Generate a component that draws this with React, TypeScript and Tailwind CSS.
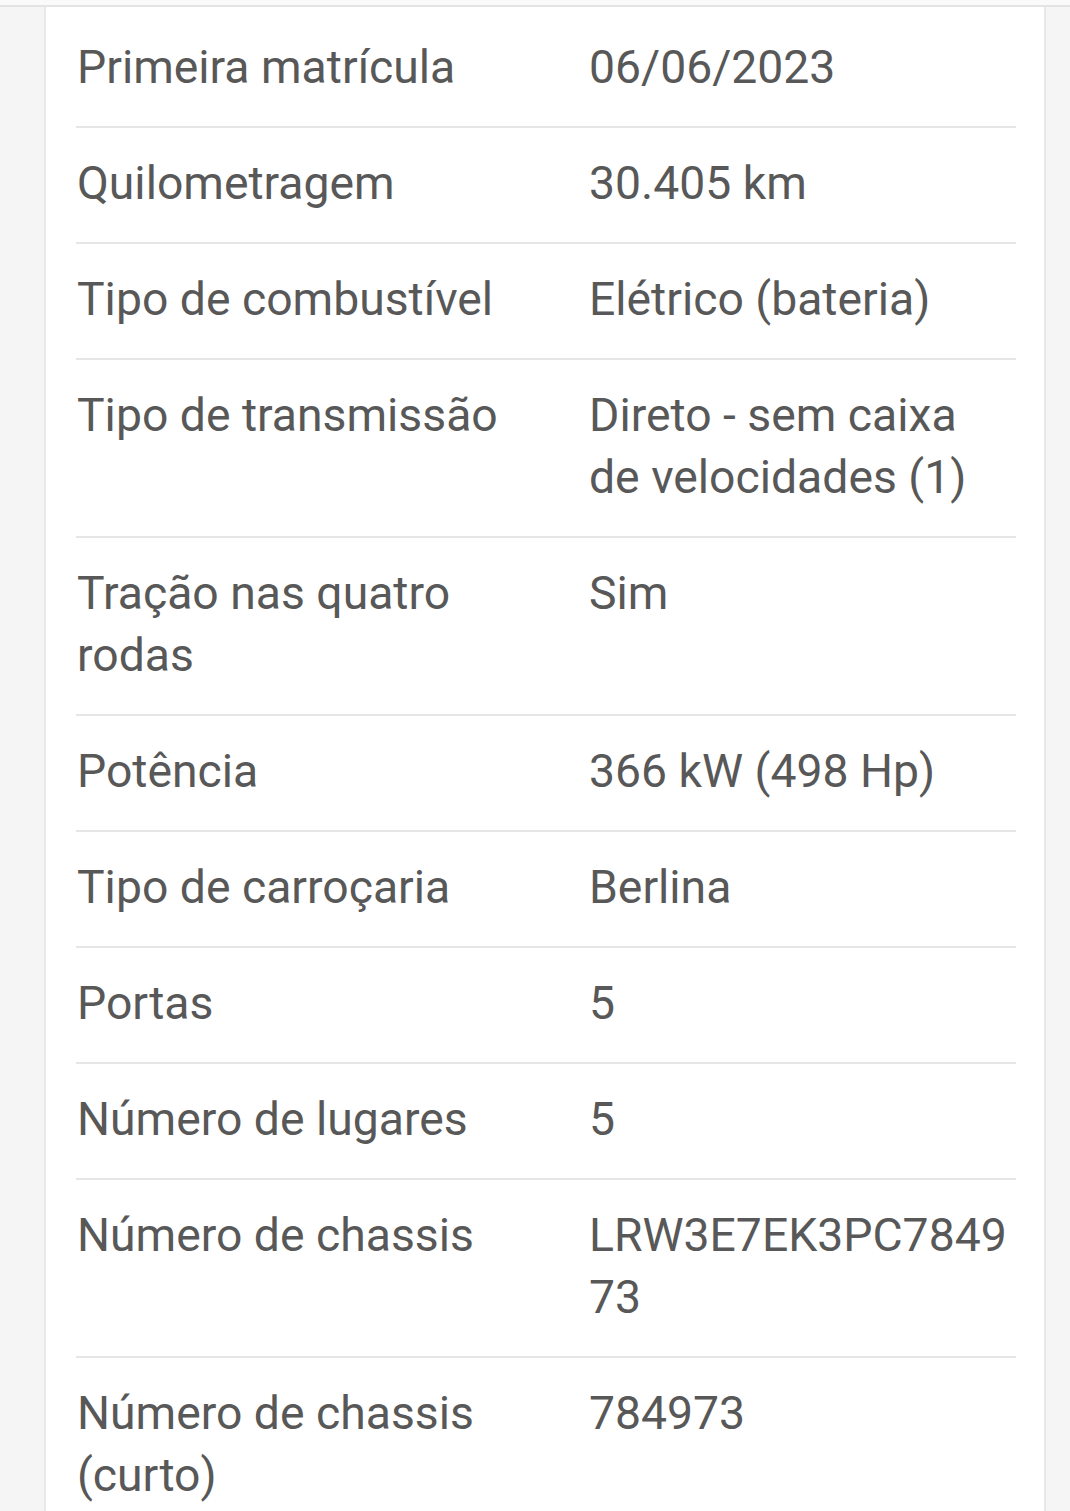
import React from "react";

const rows = [
  { label: "Primeira matrícula", value: "06/06/2023" },
  { label: "Quilometragem", value: "30.405 km" },
  { label: "Tipo de combustível", value: "Elétrico (bateria)" },
  { label: "Tipo de transmissão", value: "Direto - sem caixa de velocidades (1)" },
  { label: "Tração nas quatro rodas", value: "Sim" },
  { label: "Potência", value: "366 kW (498 Hp)" },
  { label: "Tipo de carroçaria", value: "Berlina" },
  { label: "Portas", value: "5" },
  { label: "Número de lugares", value: "5" },
  { label: "Número de chassis", value: "LRW3E7EK3PC784973" },
  { label: "Número de chassis (curto)", value: "784973" },
];

export default function App() {
  return (
    <div
      className="h-[1511px] overflow-hidden bg-[#f5f5f5]"
      style={{ fontFamily: "Roboto, 'Noto Sans', sans-serif" }}
    >
      <div className="h-[5px] bg-[#fafafa]" />
      <div className="h-[2px] bg-[#e4e4e4]" />
      <div className="ml-[44px] w-[1002px] border-x-2 border-[#e8e8e8] bg-white pt-[5px] pl-[30px] pr-[28px]">
        {rows.map((row, i) => (
          <div
            key={row.label + i}
            className={`grid grid-cols-[513px_minmax(0,1fr)] pt-[24px] pb-[28px] text-[46.3px] leading-[62px] text-[#585858] ${
              i < rows.length - 1 ? "border-b-2 border-[#e6e6e6]" : ""
            }`}
          >
            <div className="pl-px pr-[40px]">{row.label}</div>
            <div className="[overflow-wrap:anywhere]">{row.value}</div>
          </div>
        ))}
      </div>
    </div>
  );
}
